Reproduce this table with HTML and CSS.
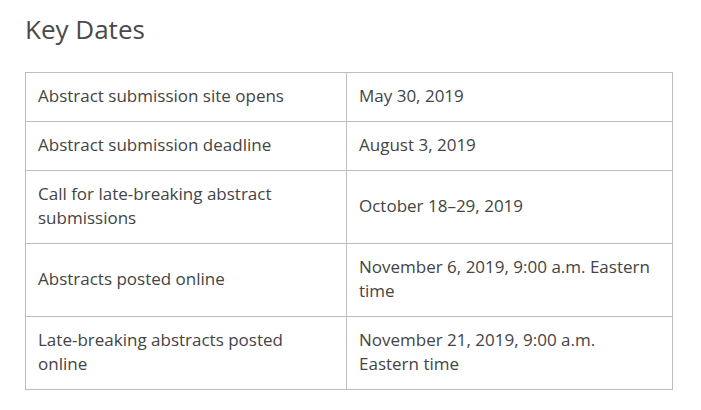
FILE: index.html
```html
<!DOCTYPE html>
<html>
<head>
<meta charset="utf-8">
<link rel="stylesheet" href="styles.css">
</head>
<body>
<section class="key-dates">
  <h2 class="title">Key Dates</h2>
  <table class="dates">
    <tr><td>Abstract submission site opens</td><td>May 30, 2019</td></tr>
    <tr><td>Abstract submission deadline</td><td>August 3, 2019</td></tr>
    <tr><td>Call for late-breaking abstract submissions</td><td>October 18–29, 2019</td></tr>
    <tr><td>Abstracts posted online</td><td>November 6, 2019, 9:00 a.m. Eastern time</td></tr>
    <tr><td>Late-breaking abstracts posted online</td><td>November 21, 2019, 9:00 a.m. Eastern time</td></tr>
  </table>
</section>
</body>
</html>
```
FILE: styles.css
```css
html, body {
  margin: 0;
  padding: 0;
  background: #fff;
}
body {
  font-family: "Open Sans", "DejaVu Sans", sans-serif;
  color: #444;
}
.key-dates {
  padding: 11px 28px 0 25px;
}
.title {
  margin: 0 0 25px 0;
  font-size: 26px;
  font-weight: 400;
  line-height: 36px;
  color: #4a4a4a;
}
.dates {
  width: 648px;
  border-collapse: collapse;
  table-layout: fixed;
}
.dates td {
  border: 1px solid #bdbdbd;
  padding: 11px 12px 13px;
  font-size: 17px;
  line-height: 24px;
  vertical-align: middle;
  color: #444;
}
.dates td:first-child {
  width: 296px;
}
.dates td:last-child {
  padding-right: 18px;
}
```
